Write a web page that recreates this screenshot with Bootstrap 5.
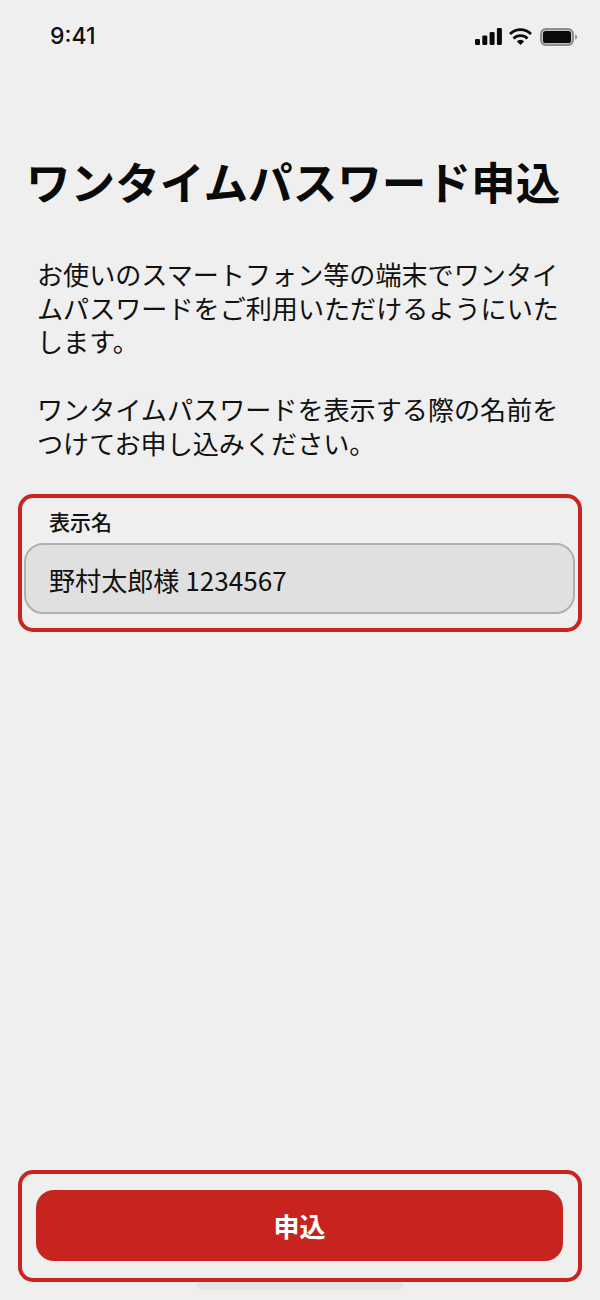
<!DOCTYPE html>
<html lang="ja">
<head>
<meta charset="utf-8">
<title>ワンタイムパスワード申込</title>
<link href="https://cdn.jsdelivr.net/npm/bootstrap@5.3.0/dist/css/bootstrap.min.css" rel="stylesheet">
<style>
html, body { margin: 0; background: #efefef; }
body { font-family: "Noto Sans CJK JP", "Liberation Sans", sans-serif; color: #111; }
.screen { width: 600px; height: 1300px; overflow: hidden; }
.status-row { height: 72px; padding: 0 20px 0 50px; }
.clock { font-family: "Inter", "Liberation Sans", sans-serif; font-size: 23px; font-weight: 500; line-height: 1; }
.page-title { font-size: 44.6px; font-weight: 700; line-height: 60px; margin: 79px 0 0 26px; white-space: nowrap; color: #0a0a0a; }
.intro { font-size: 26.1px; line-height: 33.7px; margin: 47px 0 0 37px; width: 526px; color: #111; }
.intro p { margin: 0 0 33.7px; }
.outline-box { border: 4px solid #c9241f; border-radius: 15px; margin: 0 18px; }
.field-box { height: 138px; padding: 9px 3px 0 2px; }
.field-label { font-size: 21px; font-weight: 500; line-height: 28px; margin: 0 0 8px 25px; }
.field-input.form-control { height: 71px; background: #e0e0e0; border: 2px solid #b0b0b0; border-radius: 19px; font-size: 26.1px; line-height: 1.4; color: #111; padding: 3px 23px 0; box-shadow: none; }
.action-box { height: 112px; padding: 16px 15px 0 14px; }
.apply-btn.btn { display: block; width: 100%; height: 71px; background: #c8241f; border: 0; border-radius: 18px; color: #fff; font-size: 26px; font-weight: 700; padding: 0; }
.home-bar { width: 206px; height: 8px; background: #e4e4e4; border-radius: 0 0 5px 5px; margin: 0 auto; }
.tail-gap { height: 10px; }
</style>
</head>
<body>
<div class="screen d-flex flex-column">
  <div class="status-row d-flex align-items-center justify-content-between">
    <span class="clock">9:41</span>
    <svg width="105" height="20" viewBox="0 0 105 20" aria-hidden="true">
      <g fill="#0a0a0a">
        <rect x="0" y="13" width="5" height="6" rx="1.3"/>
        <rect x="7.3" y="9.500" width="5" height="9.500" rx="1.3"/>
        <rect x="14.600" y="6" width="5" height="13" rx="1.3"/>
        <rect x="21.900" y="2" width="5" height="17" rx="1.3"/>
        <path d="M45.500 19l-3.700-3.700a5.200 5.200 0 0 1 7.400 0Z"/>
      </g>
      <g fill="none" stroke="#0a0a0a" stroke-width="2.8">
        <path d="M38.500 12.500a10 10 0 0 1 14 0"/>
        <path d="M35 8a15 15 0 0 1 21 0"/>
      </g>
      <rect x="66.200" y="3.200" width="31.600" height="15.600" rx="4.500" fill="none" stroke="#8f8f8f" stroke-width="2.400"/>
      <rect x="68" y="5" width="28" height="12" rx="2.600" fill="#0a0a0a"/>
      <path d="M100 8.500c1.500.3 2.300 1.200 2.300 2.500s-.8 2.200-2.300 2.500Z" fill="#9a9a9a"/>
    </svg>
  </div>

  <h1 class="page-title">ワンタイムパスワード申込</h1>

  <div class="intro">
    <p>お使いのスマートフォン等の端末でワンタイムパスワードをご利用いただけるようにいたします。</p>
    <p>ワンタイムパスワードを表示する際の名前をつけてお申し込みください。</p>
  </div>

  <div class="outline-box field-box">
    <label class="field-label d-block" for="displayName">表示名</label>
    <input id="displayName" class="form-control field-input" type="text" value="野村太郎様 1234567">
  </div>

  <div class="flex-grow-1"></div>

  <div class="outline-box action-box">
    <button type="button" class="btn apply-btn">申込</button>
  </div>
  <div class="home-bar"></div>
  <div class="tail-gap flex-shrink-0"></div>
</div>
<script src="https://cdn.jsdelivr.net/npm/bootstrap@5.3.0/dist/js/bootstrap.bundle.min.js"></script>
</body>
</html>
